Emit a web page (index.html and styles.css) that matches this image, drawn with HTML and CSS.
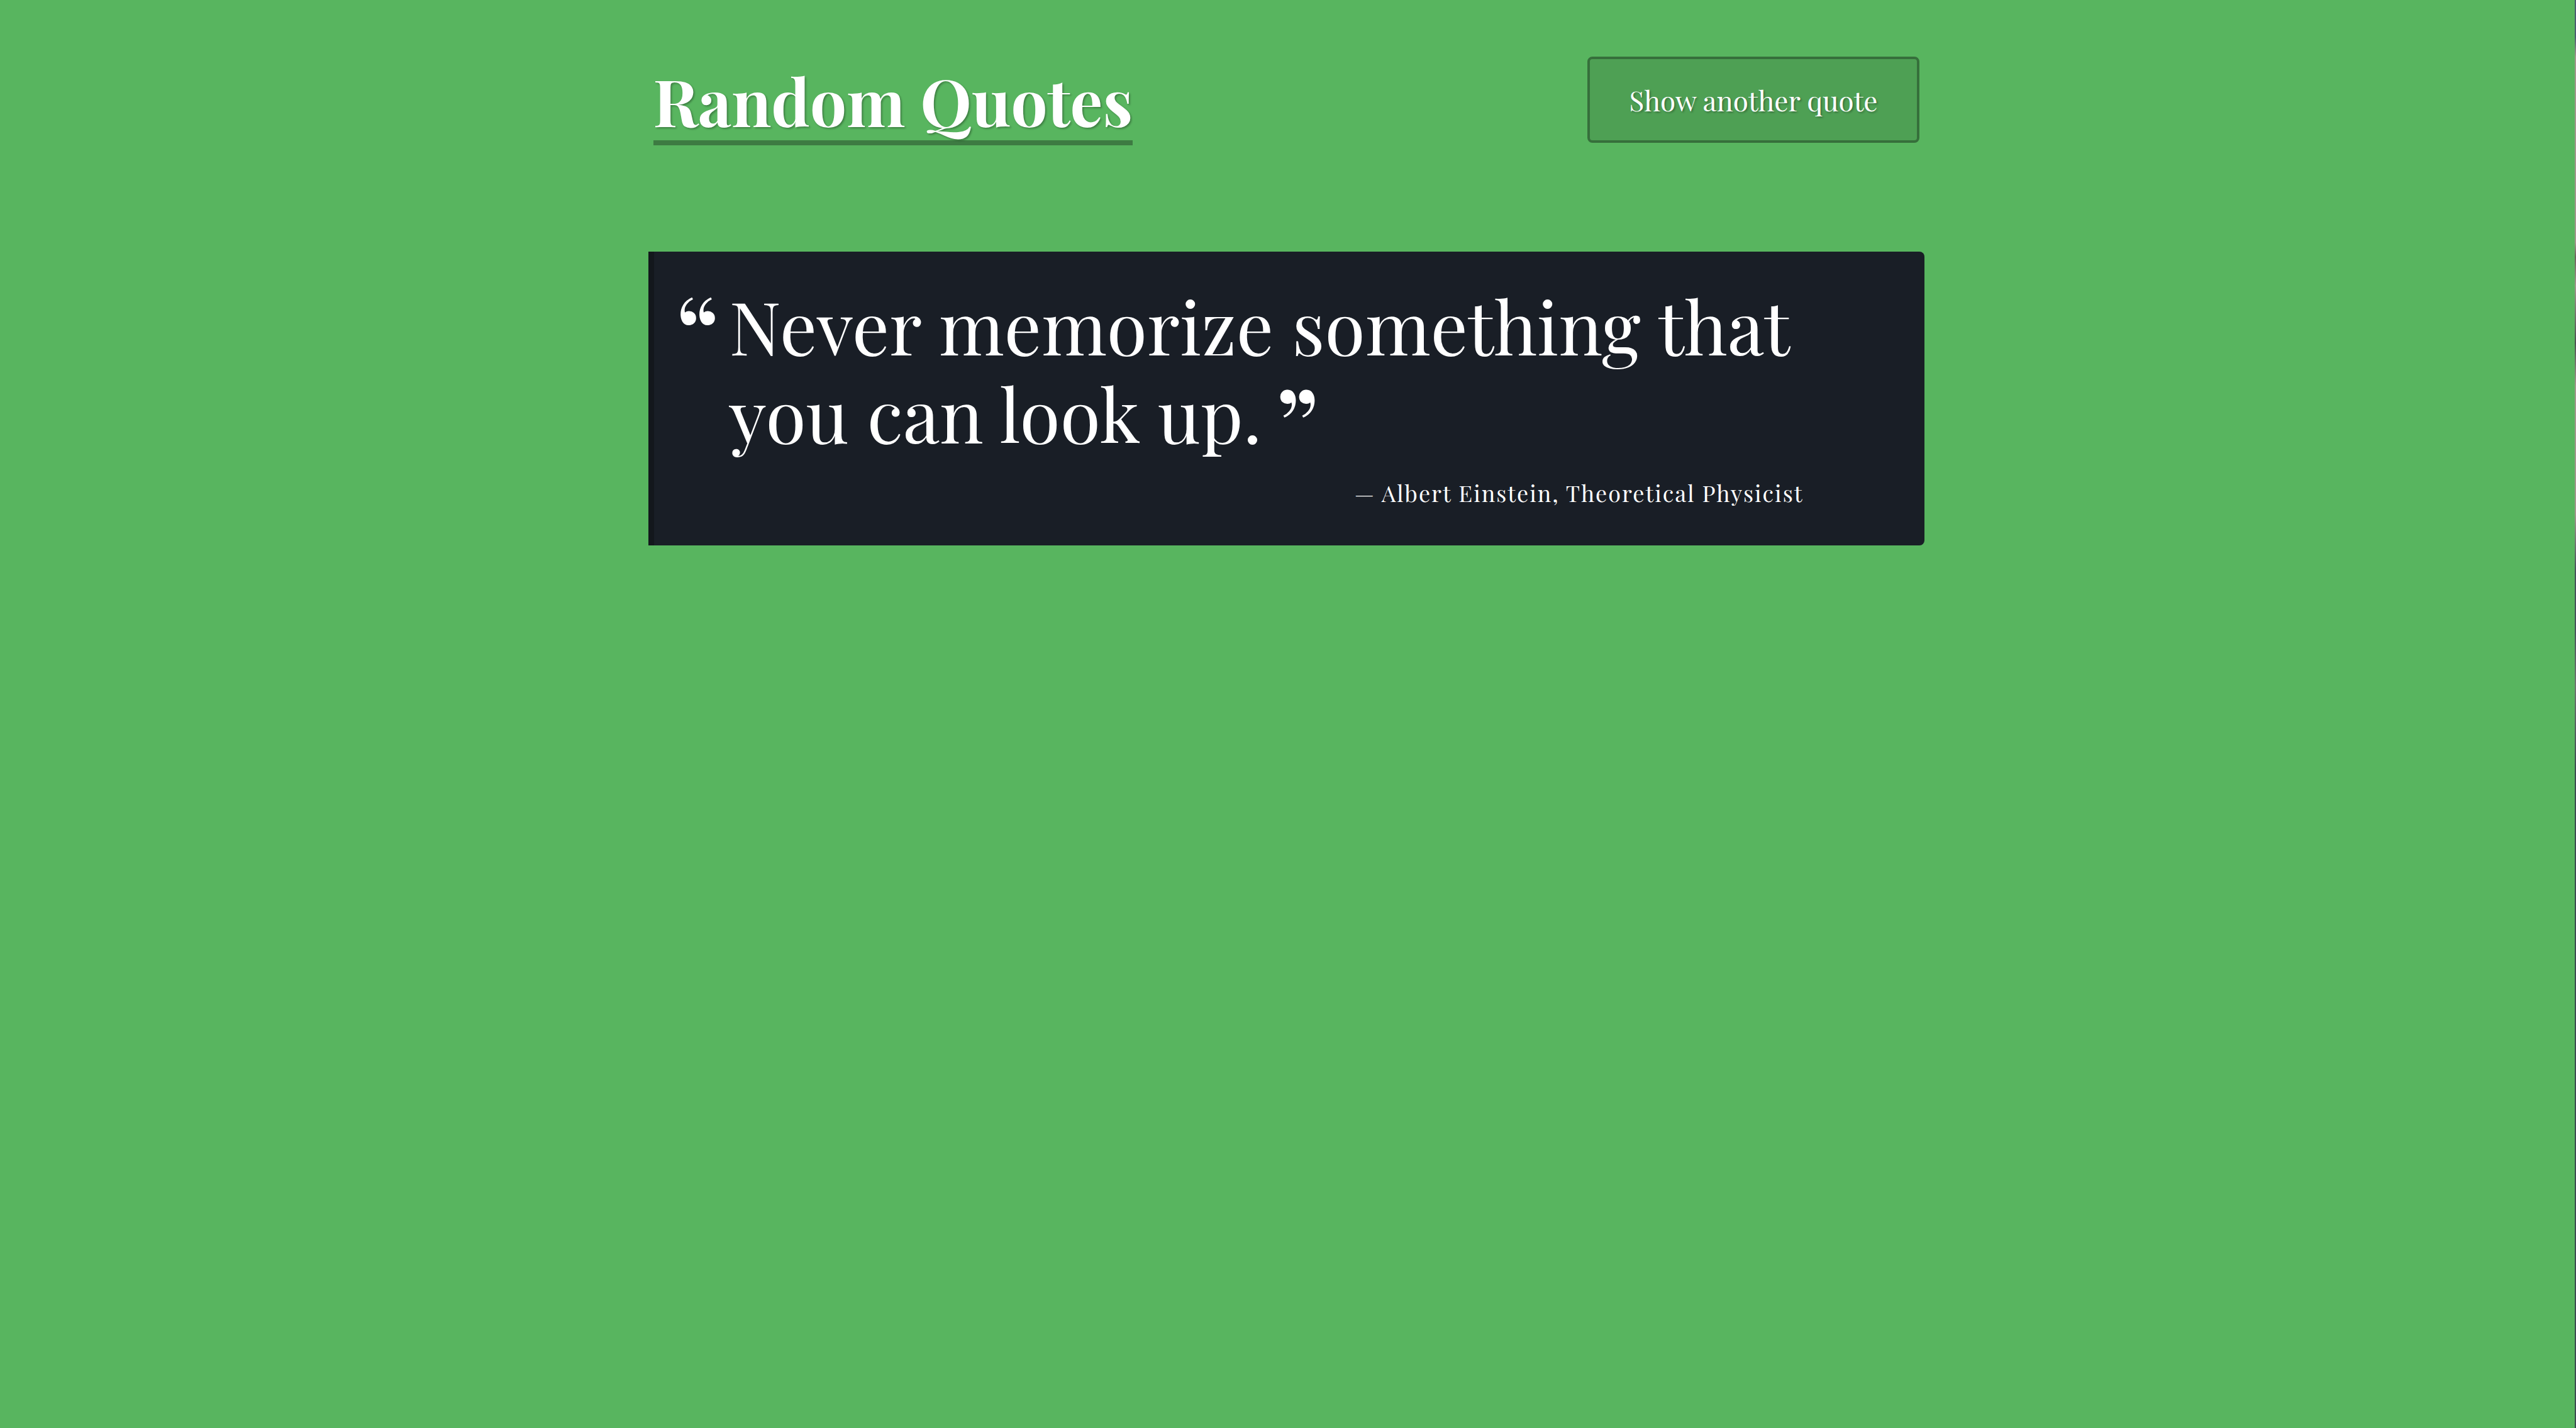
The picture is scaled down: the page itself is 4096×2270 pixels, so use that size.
FILE: index.html
```html
<!DOCTYPE html>
<html lang="en">
<head>
<meta charset="utf-8">
<title>Random Quotes</title>
<link rel="stylesheet" href="styles.css">
</head>
<body>
<div class="container">
  <header class="header">
    <h1 class="title">Random Quotes</h1>
    <button class="button" type="button">Show another quote</button>
  </header>
  <main>
    <figure class="card">
      <span class="mark mark-open">“</span>
      <div class="content">
        <blockquote class="quote">Never memorize something that you can look up.<span class="mark mark-close">”</span></blockquote>
        <figcaption class="author">— Albert Einstein, Theoretical Physicist</figcaption>
      </div>
    </figure>
  </main>
</div>
</body>
</html>
```
FILE: styles.css
```css
* { box-sizing: border-box; }

html {
  display: flex;
  min-height: 100%;
  background: #58b55f;
}

body {
  flex: 1;
  margin: 0;
  padding: 90px 6px 0 0;
  background: linear-gradient(#4a5e70 0, #4a5e70 2.6%, #a3978e 4%, #a3978e 17%, #6b625c 18%, #a3978e 20%, #4a5250 24%, #a3978e 27%, #a3978e 36%, #45525a 40%, #45525a 44%, #6f7470 48%, #3b4c50 54%, #3b4c50 100%) right top / 2px 100% no-repeat;
  color: #fff;
  font-family: "Playfair Display", "Liberation Serif", serif;
}

.container {
  width: 90%;
  max-width: 2029px;
  margin: 0 auto;
}

.header {
  display: flex;
  justify-content: space-between;
  align-items: flex-start;
  padding: 0 8px;
  margin-bottom: 169px;
}

.title {
  margin: 6px 0 0;
  border-bottom: 8px solid #3d7b42;
  font-size: 103px;
  line-height: 127px;
  text-shadow: 2px 2px 3px rgba(0, 0, 0, 0.3);
}

.button {
  padding: 32px 62px;
  border: 4px solid #366f3b;
  border-radius: 8px;
  background: #4ea054;
  color: #fff;
  font: inherit;
  font-size: 44px;
  line-height: 65px;
  text-shadow: 2px 2px 3px rgba(0, 0, 0, 0.3);
}

.card {
  display: flex;
  margin: 0;
  padding: 46px 192px 56px 33px;
  border-left: 9px solid #13171c;
  border-radius: 0 8px 8px 0;
  background: #191e26;
}

.mark { font-size: 176px; }

.mark-open {
  flex: none;
  width: 87px;
  line-height: 162px;
}

.mark-close {
  margin-left: 20px;
  line-height: 0;
  vertical-align: -41px;
}

.content { flex: 1; }

.quote {
  margin: 0;
  font-size: 117px;
  line-height: 140px;
}

.author {
  margin-top: 29px;
  font-size: 36px;
  line-height: 56px;
  letter-spacing: 2px;
  text-align: right;
}
```
